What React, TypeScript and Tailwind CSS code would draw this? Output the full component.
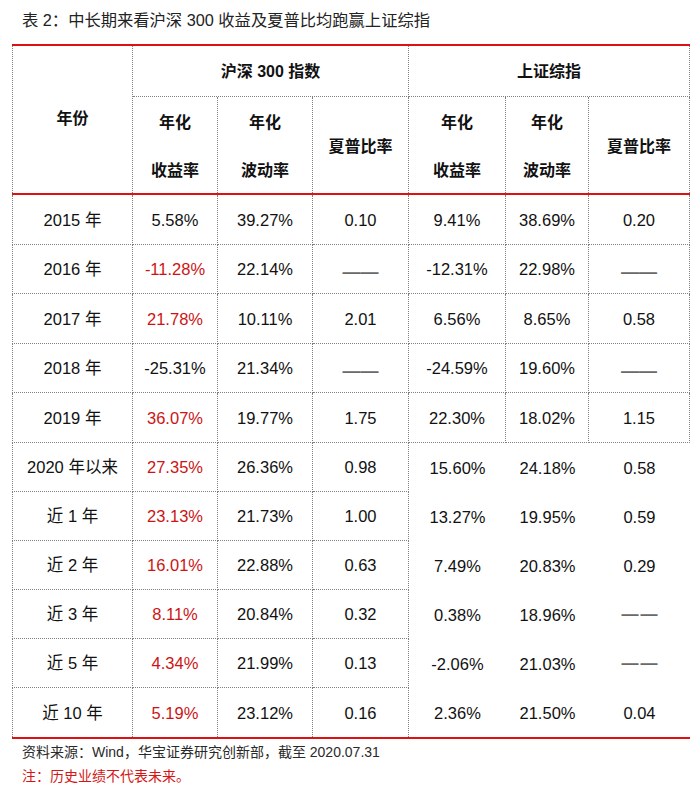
import React from "react";

type Row = {
  label: string;
  v: [string, string, string, string, string, string];
  red: boolean;
};

const rows: Row[] = [
  { label: "2015 年", v: ["5.58%", "39.27%", "0.10", "9.41%", "38.69%", "0.20"], red: false },
  { label: "2016 年", v: ["-11.28%", "22.14%", "D", "-12.31%", "22.98%", "D"], red: true },
  { label: "2017 年", v: ["21.78%", "10.11%", "2.01", "6.56%", "8.65%", "0.58"], red: true },
  { label: "2018 年", v: ["-25.31%", "21.34%", "D", "-24.59%", "19.60%", "D"], red: false },
  { label: "2019 年", v: ["36.07%", "19.77%", "1.75", "22.30%", "18.02%", "1.15"], red: true },
  { label: "2020 年以来", v: ["27.35%", "26.36%", "0.98", "15.60%", "24.18%", "0.58"], red: true },
  { label: "近 1 年", v: ["23.13%", "21.73%", "1.00", "13.27%", "19.95%", "0.59"], red: true },
  { label: "近 2 年", v: ["16.01%", "22.88%", "0.63", "7.49%", "20.83%", "0.29"], red: true },
  { label: "近 3 年", v: ["8.11%", "20.84%", "0.32", "0.38%", "18.96%", "G"], red: true },
  { label: "近 5 年", v: ["4.34%", "21.99%", "0.13", "-2.06%", "21.03%", "G"], red: true },
  { label: "近 10 年", v: ["5.19%", "23.12%", "0.16", "2.36%", "21.50%", "0.04"], red: true },
];

const line = "border-dotted border-[#808080]";

function Value({ s }: { s: string }) {
  if (s === "D") {
    return <span className="text-[18px] font-bold leading-none text-[#6a6a6a] translate-y-[2px]">——</span>;
  }
  if (s === "G") {
    return (
      <span className="text-[17px] font-bold leading-none text-[#6a6a6a] tracking-[2px] pl-[2px] translate-y-[-1px]">——</span>
    );
  }
  return <span>{s}</span>;
}

export default function App() {
  const font = { fontFamily: '"Liberation Sans", "Noto Sans CJK SC", Arial, sans-serif' };
  return (
    <div className="w-[700px] h-[790px] bg-white text-[#111]" style={font}>
      <div className="pt-[8px] pl-[22px] text-[16.3px] leading-[24px] text-[#222]">
        表 2：中长期来看沪深 300 收益及夏普比均跑赢上证综指
      </div>

      <div className="ml-[12px] mt-[12px] w-[678px]">
        {/* header */}
        <div className="border-y-2 border-solid border-[#dd1111]">
          <div className="grid grid-cols-[121px_85px_95px_96px_97px_83px_101px] grid-rows-[51px_96px] font-bold text-[16px]">
            <div className={`row-span-2 border-l border-r ${line} flex items-center justify-center pb-[2px]`}>年份</div>
            <div className={`col-span-3 border-r border-b ${line} flex items-center justify-center pt-[2px]`}>沪深 300 指数</div>
            <div className={`col-span-3 border-r border-b ${line} flex items-center justify-center pt-[2px]`}>上证综指</div>

            <div className={`border-r ${line} flex flex-col items-center justify-center leading-[48px] pt-[4px]`}>
              <span>年化</span>
              <span>收益率</span>
            </div>
            <div className={`border-r ${line} flex flex-col items-center justify-center leading-[48px] pt-[4px]`}>
              <span>年化</span>
              <span>波动率</span>
            </div>
            <div className={`border-r ${line} flex items-center justify-center pt-[4px]`}>夏普比率</div>
            <div className={`border-r ${line} flex flex-col items-center justify-center leading-[48px] pt-[4px]`}>
              <span>年化</span>
              <span>收益率</span>
            </div>
            <div className={`border-r ${line} flex flex-col items-center justify-center leading-[48px] pt-[4px]`}>
              <span>年化</span>
              <span>波动率</span>
            </div>
            <div className={`border-r ${line} flex items-center justify-center pt-[4px]`}>夏普比率</div>
          </div>
        </div>

        {/* body */}
        <div className="border-b-2 border-solid border-[#dd1111]">
          <div className="grid grid-cols-[121px_85px_95px_96px_97px_83px_101px] grid-rows-[50px_49px_50px_49px_50px_49px_49px_49px_49px_49px_49px] text-[16.5px]">
            {rows.map((r, i) => {
              const upper = i < 5;
              const last = i === rows.length - 1;
              const bLeft = last ? "" : "border-b";
              const bRight = upper ? "border-b border-r" : "";
              return (
                <React.Fragment key={r.label}>
                  <div className={`border-l border-r ${bLeft} ${line} flex items-center justify-center pt-[1px]`}>
                    {r.label}
                  </div>
                  {r.v.map((val, j) => {
                    let cls = "";
                    if (j < 3) cls = `border-r ${bLeft} ${line}`;
                    else cls = `${bRight} ${line}`;
                    const color = j === 0 && r.red ? "text-[#cc1414]" : "";
                    return (
                      <div key={j} className={`${cls} ${color} flex items-center justify-center pt-[1px]`}>
                        <Value s={val} />
                      </div>
                    );
                  })}
                </React.Fragment>
              );
            })}
          </div>
        </div>
      </div>

      <div className="pl-[22px] pt-[1px] text-[14px] leading-[24px]">
        <div className="text-[#2a2a2a]">资料来源：Wind，华宝证券研究创新部，截至 2020.07.31</div>
        <div className="text-[#d41515]">注：历史业绩不代表未来。</div>
      </div>
    </div>
  );
}
